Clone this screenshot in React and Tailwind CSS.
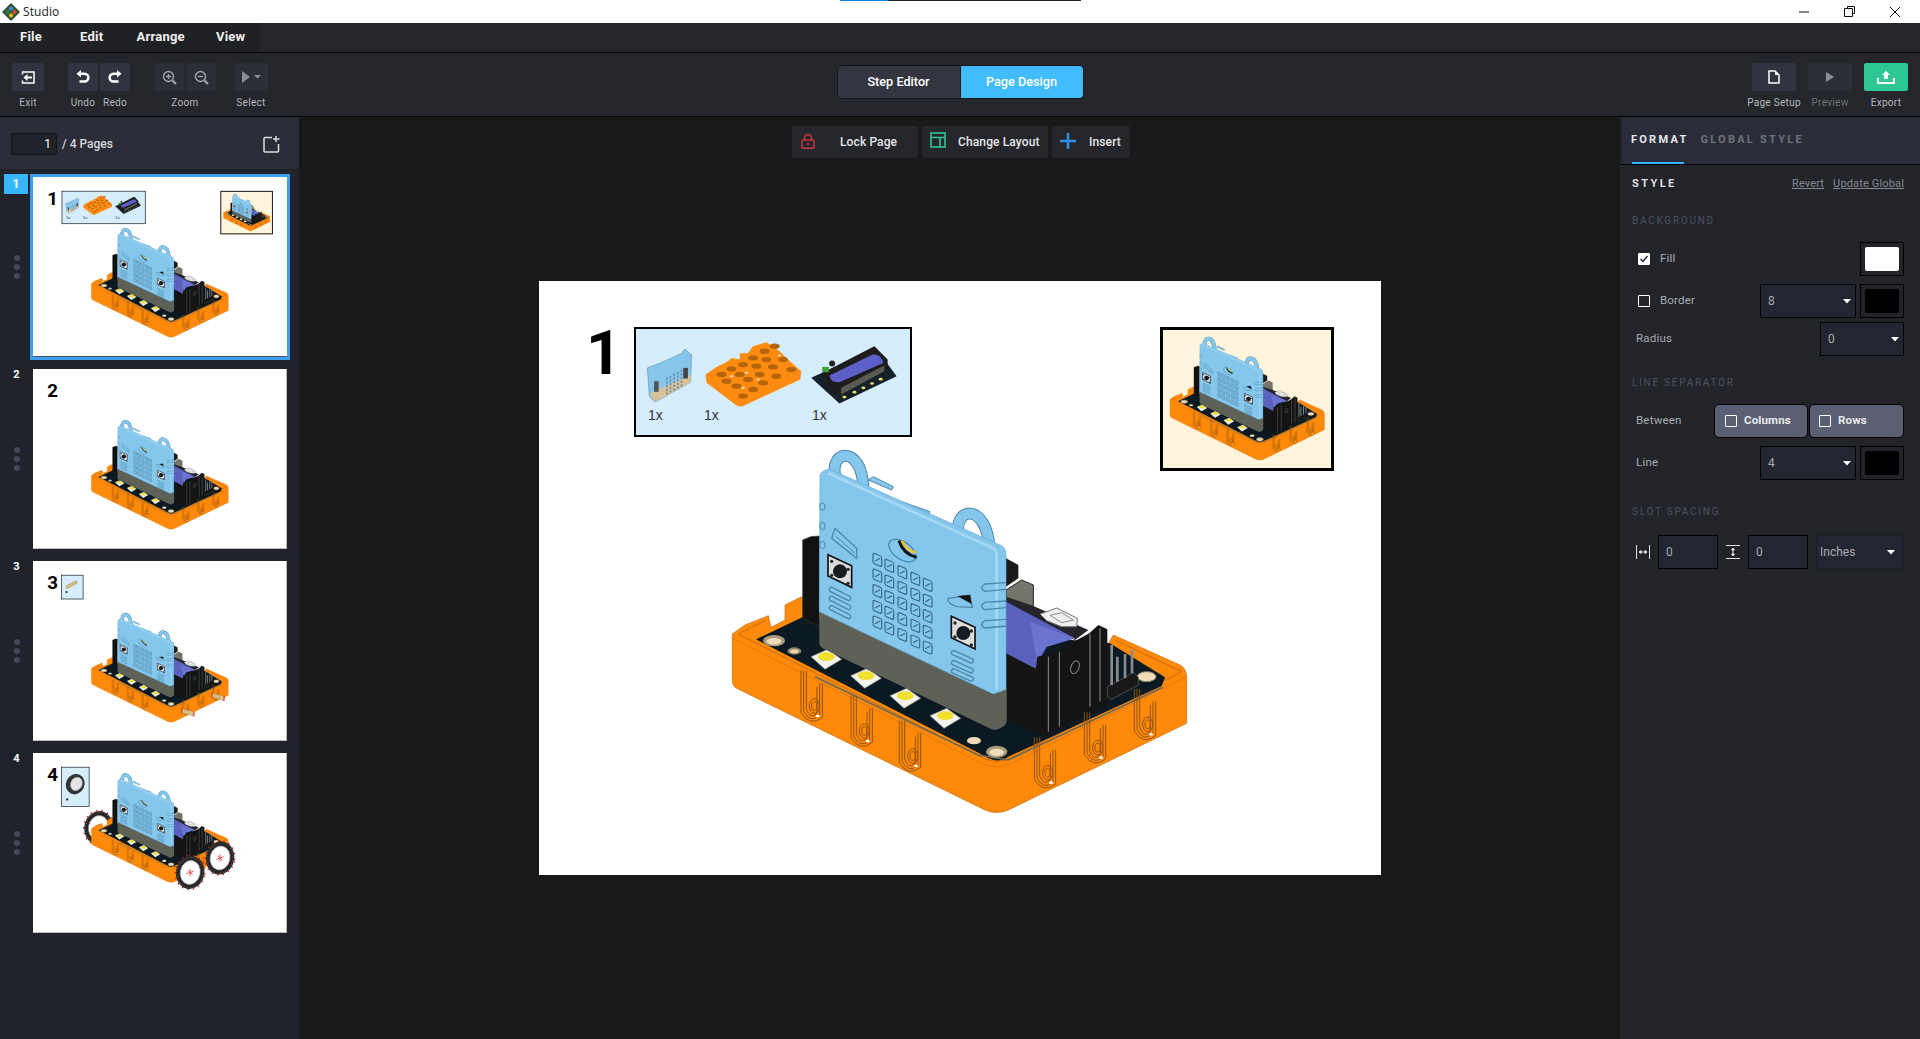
import React from "react";

const clips = [[335,800],[485,875],[630,950],[1035,1000],[1185,925],[1335,855]];
const leds = [[378,688],[497,745],[615,805],[735,865]];
const gx = [532,568,607,646,683];
const gy = [390,408,427,447,465];

function Model({ className }) {
  return (
    <svg viewBox="0 0 1500 1200" className={className} fill="none">
      <path d="M97 612 L135 585 L205 557 L213 592 L255 570 L255 525 L305 500 L330 570 L920 880 L1100 860 L1240 615 L1440 705 Q1460 715 1460 745 L1460 880 L925 1140 Q890 1155 855 1140 L110 775 Q97 768 97 750 Z" fill="#ff8a0a" stroke="#c06c10" strokeWidth="2" />
      <path d="M97 625 L845 1000 Q890 1020 935 1000 L1460 740" stroke="#e27908" strokeWidth="3" />
      <path d="M115 612 L200 570 M115 612 L850 985 Q890 1003 930 985 L1445 725 L1245 630" stroke="#a85a10" strokeWidth="2" />
      <path d="M168 628 L310 560 L1230 640 L1395 742 L1385 768 L925 980 Q895 1000 865 985 L835 968 Z" fill="#0b1a22" />
      <path d="M345 740 L835 975 L925 990 L1388 772" stroke="#6b6a58" strokeWidth="5" />
      <ellipse cx="222" cy="632" rx="33" ry="17" fill="#a99a7c" /><ellipse cx="222" cy="634" rx="22" ry="10" fill="#f0dcb8" />
      <ellipse cx="283" cy="663" rx="21" ry="11" fill="#8f8468" /><ellipse cx="283" cy="664" rx="13" ry="6" fill="#ead6ae" />
      <ellipse cx="822" cy="932" rx="21" ry="11" fill="#f0dcb8" />
      <ellipse cx="890" cy="965" rx="32" ry="18" fill="#a99a7c" /><ellipse cx="890" cy="967" rx="22" ry="11" fill="#f0dcb8" />
      <ellipse cx="1340" cy="740" rx="28" ry="15" fill="#f0dcb8" stroke="#8f8468" strokeWidth="3" />
      <path d="M308 330 L332 320 L358 318 L358 590 L308 565 Z" fill="#111" stroke="#333" strokeWidth="2" />
      <path d="M918 385 L955 405 L955 445 L918 470 Z" fill="#1a1a1a" />
      <path d="M918 480 L965 450 L1000 465 L1000 530 L920 510 Z" fill="#74756b" stroke="#222" strokeWidth="3" />
      <path d="M918 500 L1000 528 L1165 600 L1125 630 L918 520 Z" fill="#24242a" />
      <path d="M1020 552 L1070 534 L1132 565 L1130 590 L1085 590 L1040 572 Z" fill="#efefef" stroke="#777" strokeWidth="3" />
      <path d="M1050 556 L1085 548 L1120 570 L1085 578 Z" stroke="#777" strokeWidth="2.5" />
      <path d="M918 515 L1125 625 L1040 650 L1005 718 L918 675 Z" fill="#5a61bd" />
      <path d="M990 575 L1125 625 L1040 650 L1010 690 Z" fill="#6a74d0" />
      <path d="M918 670 L1008 716 L1012 680 L1060 668 L1168 610 L1195 585 L1222 598 L1222 822 L1030 918 L918 868 Z" fill="#141414" />
      <path d="M1045 680 V905 M1078 665 V890 M1170 612 V830 M1200 595 V815" stroke="#8e8e8e" strokeWidth="3" />
      <ellipse cx="1125" cy="712" rx="12" ry="20" transform="rotate(20 1125 712)" stroke="#888" strokeWidth="3" />
      <path d="M1222 770 L1300 728 L1315 742 L1315 765 L1235 808 L1222 800 Z" fill="#181818" stroke="#666" strokeWidth="2" />
      <path d="M1235 645 V765 M1252 680 V755 M1275 672 V745 M1296 660 V730" stroke="#8a8a8a" strokeWidth="8" />
      {leds.map(([x, y]) => (
        <g key={x} transform={`translate(${x} ${y})`}>
          <path d="M-45 -8 L5 -30 L47 0 L-3 30 Z" fill="#f3f3ef" stroke="#888" strokeWidth="2" />
          <ellipse cx="1" cy="-8" rx="25" ry="13" fill="#f2e02e" />
        </g>
      ))}
      <path d="M358 540 L358 640 Q358 650 372 657 L875 898 Q890 904 905 892 Q920 885 920 870 L920 775 L880 795 Z" fill="#5f6157" />
      <path d="M520 140 L580 170 L575 180 L505 150 Z M605 215 L690 245 L685 255 L600 225 Z" fill="#85c6ec" stroke="#4f87a8" strokeWidth="3" />
      <path d="M405 135 C392 55 485 50 490 170" stroke="#4f87a8" strokeWidth="36" />
      <path d="M405 135 C392 55 485 50 490 170" stroke="#85c6ec" strokeWidth="30" />
      <path d="M775 310 C765 225 860 225 868 350" stroke="#4f87a8" strokeWidth="36" />
      <path d="M775 310 C765 225 860 225 868 350" stroke="#85c6ec" strokeWidth="30" />
      <path d="M360 135 Q365 120 390 118 L900 345 Q918 352 918 375 L918 778 L880 793 L358 545 Z" fill="#85c6ec" stroke="#6aabd0" strokeWidth="2" />
      <path d="M385 130 L880 355 Q890 362 890 380 L890 780" stroke="#a6d8f4" strokeWidth="8" />
      {[230,288,345].map((y) => <ellipse key={y} cx="367" cy={y} rx="8" ry="11" stroke="#4f87a8" strokeWidth="3" />)}
      {[470,525,580].map((y) => <path key={y} d={`M918 ${y-12} L855 ${y-8} Q835 ${y+4} 855 ${y+14} L918 ${y+8}`} stroke="#4f87a8" strokeWidth="4" />)}
      <path d="M405 295 L470 355 L470 385 L395 325 Z" stroke="#4f87a8" strokeWidth="4" />
      <path d="M410 320 L465 370" stroke="#4f87a8" strokeWidth="3" />
      <path d="M745 505 L810 495 L817 532 L770 530 Q740 520 745 505 Z" stroke="#4f87a8" strokeWidth="4" />
      <path d="M772 498 L810 495 L815 522 Z" fill="#111" />
      <ellipse cx="607" cy="362" rx="46" ry="26" transform="rotate(35 607 362)" stroke="#4f87a8" strokeWidth="4" />
      <path d="M597 332 Q610 372 650 382" stroke="#111" strokeWidth="9" />
      <path d="M605 332 Q620 362 648 368" stroke="#f4c514" strokeWidth="7" />
      {gy.map((_, c) => [0,1,2,3,4].map((r) => (
        <g key={`${c}-${r}`} transform={`translate(${gx[c]} ${gy[c] + r * 47}) skewY(22)`}>
          <rect x="-13" y="-16" width="26" height="31" rx="5" stroke="#3a6985" strokeWidth="3.5" />
          <path d="M-7 6 L8 -8" stroke="#3a6985" strokeWidth="3" />
        </g>
      )))}
      {[[420,422],[790,607]].map(([x,y]) => (
        <g key={x} transform={`translate(${x} ${y})`}>
          <path d="M-36 -48 L35 -15 L35 50 L-36 16 Z" fill="#dcdcdc" stroke="#111" strokeWidth="5" />
          <circle r="21" cy="2" fill="#141c22" />
          {[[-25,-28],[24,-4],[-25,14],[24,38]].map(([a,b],i)=><circle key={i} cx={a} cy={b} r="5" fill="#222" />)}
        </g>
      ))}
      {[470,497,525].map((y) => <rect key={y} x="392" y={y} width="70" height="13" rx="5" transform={`rotate(27 392 ${y})`} stroke="#4f87a8" strokeWidth="4" />)}
      {[660,690,715].map((y) => <rect key={y} x="758" y={y} width="70" height="13" rx="5" transform={`rotate(24 758 ${y})`} stroke="#4f87a8" strokeWidth="4" />)}
      {clips.map(([x,y]) => (
        <g key={x} transform={`translate(${x} ${y})`} stroke="#8f5208" strokeWidth="3">
          <path d="M-32 -78 L-32 48 Q-5 92 32 62 L32 -40" />
          <path d="M-24 -78 L-24 44 Q-3 82 24 56 L24 -40" />
          <path d="M-16 -78 L-16 38 Q-3 70 16 50 L16 -30" />
          <ellipse cx="8" cy="28" rx="15" ry="22" />
          <ellipse cx="8" cy="28" rx="8" ry="13" />
          <ellipse cx="18" cy="58" rx="6" ry="4" fill="#fff" stroke="none" />
        </g>
      ))}
    </svg>
  );
}

const plateHoles = [[545,285],[575,268],[610,255],[640,235],[675,215],[705,200],[730,240],[755,270],[700,262],[660,285],[625,300],[590,320],[560,305],[640,330],[670,310],[710,290],[610,350],[680,240],[600,285],[650,260]];

function PartsArt() {
  return (
    <svg viewBox="280 142 834 328" className="w-[278px] h-[109px]" fill="none">
      <path d="M322 265 L362 250 L425 222 L435 208 L450 222 L455 225 L452 308 L345 368 L328 350 Z" fill="#88c5ea" stroke="#5f95b5" strokeWidth="2" />
      <path d="M328 342 L452 285 L452 308 L345 368 Z" fill="#d8c29a" />
      <rect x="342" y="305" width="14" height="32" fill="#555" /><rect x="430" y="265" width="14" height="32" fill="#444" />
      {[0,1,2,3,4].map((a)=>[0,1,2,3,4].map((b)=><rect key={`${a}${b}`} x={378+a*11} y={295-a*6+b*11} width="5" height="6" fill="#5f8aa6" />))}
      <path d="M497 285 L530 262 L565 245 L575 235 L600 240 L600 222 L625 220 L640 200 L680 188 L720 215 L745 240 L785 275 L782 300 L605 382 L590 378 L500 310 Z" fill="#ff8c10" />
      {plateHoles.map(([x,y],i)=>(
        <ellipse key={i} cx={x} cy={y} rx="15" ry="8" fill="#b5640a" />
      ))}
      {[[620,280],[575,290],[720,228],[610,325],[655,300]].map(([x,y],i)=><ellipse key={i} cx={x} cy={y} rx="5" ry="3" fill="#fff" opacity="0.8" />)}
      <path d="M815 295 L1010 205 L1072 290 L900 372 Z" fill="#16222a" />
      <path d="M850 280 L1005 200 L1045 240 L1045 272 L895 348 L875 340 Z" fill="#1c1c1c" />
      <path d="M870 288 L1000 225 Q1025 222 1032 250 L900 308 Q872 310 870 288 Z" fill="#5c5fc8" />
      <path d="M905 345 L1035 275 L1035 258 L905 325 Z" fill="#5a5b50" />
      <circle cx="878" cy="252" r="9" fill="#222" /><rect x="848" y="262" width="20" height="16" fill="#3ea23a" />
      {[[915,353],[945,338],[972,325],[998,312],[1024,299]].map(([x,y],i)=><ellipse key={i} cx={x} cy={y} rx="6" ry="4" fill="#ecdf6a" />)}
    </svg>
  );
}

function Wheel({ x, y }) {
  return (
    <svg viewBox="-60 -60 120 120" width="120" height="120" className="absolute" style={{ left: x - 60, top: y - 60 }}>
      <ellipse rx="47" ry="55" transform="rotate(12)" fill="#262626" />
      <ellipse rx="49" ry="57" transform="rotate(12)" fill="none" stroke="#e01010" strokeWidth="4" strokeDasharray="5 14" />
      <ellipse rx="43" ry="51" transform="rotate(12)" fill="none" stroke="#555" strokeWidth="4" strokeDasharray="4 6" />
      <ellipse rx="33" ry="40" transform="rotate(12)" fill="#fff" stroke="#999" strokeWidth="2" />
      <path d="M-12 4 L12 -4 M0 -12 L0 12 M-8 -8 L8 8" stroke="#e04a4a" strokeWidth="3" />
    </svg>
  );
}

function Peg({ x, y }) {
  return (
    <svg viewBox="0 0 48 34" className="absolute w-[48px] h-[34px]" style={{ left: x - 24, top: y - 17 }}>
      <path d="M4 6 L42 16 L40 30 L3 20 Z" fill="#e2c48e" stroke="#a88a58" strokeWidth="1.5" />
      <path d="M12 8 L10 22 M20 10 L18 24 M28 12 L26 26" stroke="#a88a58" strokeWidth="1.5" />
      <path d="M2 4 L2 22 M43 15 L42 32" stroke="#e01010" strokeWidth="3" />
    </svg>
  );
}

function Page({ n }) {
  const shift = n === 4 ? "top-[47px]" : n === 3 ? "top-[152px]" : "top-[149px]";
  return (
    <div className="relative w-[842px] h-[594px] bg-white overflow-hidden">
      {n === 4 && <Wheel x={217} y={247} />}
      <Model className={`absolute left-[161px] ${shift} w-[500px] h-[400px]`} />
      {n === 4 && <><Wheel x={521} y={396} /><Wheel x={620} y={348} /></>}
      {n === 3 && <><Peg x={615} y={449} /><Peg x={515} y={501} /></>}
      <div className="absolute left-[47px] top-[36px] text-[62px] leading-[72px] font-bold text-black">{n}</div>
      {n === 1 && (
        <>
          <div className="absolute left-[95px] top-[46px] w-[278px] h-[110px] border-2 border-black bg-[#d5edfd] overflow-hidden">
            <div className="-ml-[3px] -mt-[2px]"><PartsArt /></div>
            {[[12,"1x"],[68,"1x"],[176,"1x"]].map(([l,t],i)=>(
              <span key={i} style={{ left: l }} className="absolute top-[78px] text-[14px] leading-[16px] text-[#333] font-['Liberation_Sans',sans-serif]">{t}</span>
            ))}
          </div>
          <div className="absolute left-[621px] top-[46px] w-[174px] h-[144px] border-[3px] border-black bg-[#fff4dc] overflow-hidden">
            <Model className="absolute left-[-4px] top-[0px] w-[170px] h-[136px]" />
          </div>
        </>
      )}
      {n === 3 && (
        <div className="absolute left-[94px] top-[46px] w-[73px] h-[81px] border-2 border-black bg-[#d5edfd]">
          <svg viewBox="0 0 73 81" className="w-full h-full">
            <path d="M14 36 L50 18 L54 26 L18 46 Z" fill="#d9bb84" stroke="#9c8152" strokeWidth="1.5" />
            <circle cx="16" cy="58" r="4" fill="#333" />
          </svg>
        </div>
      )}
      {n === 4 && (
        <div className="absolute left-[94px] top-[46px] w-[93px] h-[132px] border-2 border-black bg-[#d5edfd]">
          <svg viewBox="0 0 93 132" className="w-full h-full">
            <ellipse cx="46" cy="57" rx="32" ry="36" transform="rotate(25 46 57)" fill="#333" />
            <ellipse cx="50" cy="56" rx="20" ry="24" transform="rotate(25 50 56)" fill="#e4e4e4" stroke="#999" strokeWidth="2" />
            <circle cx="18" cy="110" r="4" fill="#333" />
          </svg>
        </div>
      )}
    </div>
  );
}

function Thumb({ n, active }) {
  return (
    <div className="relative flex mb-[12px]">
      <div className="w-[33px] flex flex-col items-center">
        {active ? (
          <div className="absolute left-[4px] top-[-3px] w-[24px] h-[20px] bg-[#38b6ff] text-white text-[12px] font-bold leading-[20px] text-center">{n}</div>
        ) : (
          <div className="h-[12px] text-white text-[11px] font-bold leading-[12px] text-center">{n}</div>
        )}
        <div className={`${active ? "mt-[78px]" : "mt-[66px]"} flex flex-col gap-[3px]`}>
          <span className="block w-[6px] h-[6px] rounded-full bg-[#44465a]" />
          <span className="block w-[6px] h-[6px] rounded-full bg-[#44465a]" />
          <span className="block w-[6px] h-[6px] rounded-full bg-[#44465a]" />
        </div>
      </div>
      <div className={`w-[254px] h-[180px] overflow-hidden ${active ? "outline-[3px] outline-[#3c9ff0]" : "border-r border-b border-[#bbb]"}`}>
        <div className="origin-top-left scale-[0.3017]"><Page n={n} /></div>
      </div>
    </div>
  );
}

const ToolBtn = ({ w = "w-[30px]", bg = "bg-[#31333f]", children }) => (
  <div className={`${w} h-[28px] rounded-[2px] ${bg} flex items-center justify-center`}>{children}</div>
);
const Lab = ({ children, dim }) => (
  <div className={`mt-[6px] h-[12px] text-[10px] leading-[12px] tracking-[0.3px] whitespace-nowrap ${dim ? "text-[#6d6f76]" : "text-[#b4b6bb]"}`}>{children}</div>
);
const Caret = () => (
  <svg width="8" height="5" viewBox="0 0 8 5"><path d="M0 0 H8 L4 4.5 Z" fill="#fff" /></svg>
);
const Sel = ({ w, v, plain }) => (
  <div className={`${w} h-[34px] flex items-center justify-between bg-[#222630] text-[12px] text-[#a8aab0] ${plain ? "border border-[#1c1f26] pl-[3px] pr-[8px]" : "border border-black pl-[7px] pr-[4px]"}`}>
    <span>{v}</span><Caret />
  </div>
);
const Swatch = ({ c }) => (
  <div className="w-[44px] h-[34px] border border-black flex items-center justify-center">
    <div className={`w-[34px] h-[24px] rounded-[2px] ${c}`} />
  </div>
);
const Check = ({ on }) => (
  <div className={`w-[12px] h-[12px] rounded-[1px] border border-white flex items-center justify-center ${on ? "bg-white" : ""}`}>
    {on && <svg width="10" height="10" viewBox="0 0 10 10"><path d="M1.5 5 L4 7.5 L8.5 2" stroke="#222" strokeWidth="1.4" fill="none" /></svg>}
  </div>
);
const Section = ({ children, mt }) => (
  <div className={`${mt} h-[14px] text-[10px] leading-[14px] tracking-[1.75px] text-[#4d5060]`}>{children}</div>
);
const Label = ({ children, className = "" }) => <span className={`text-[11.5px] tracking-[0.2px] text-[#a8aab0] ${className}`}>{children}</span>;

export default function App() {
  return (
    <div className="relative w-[1920px] h-[1039px] overflow-hidden flex flex-col bg-[#191919] font-['Roboto',sans-serif]">
      <div className="absolute left-[840px] top-0 w-[241px] h-px bg-[#222] z-10"><div className="w-[48px] h-px bg-[#0a84dc]" /></div>

      {/* Title bar */}
      <div className="h-[23px] bg-white flex items-center text-[#222]">
        <svg width="18" height="18" viewBox="0 0 18 18" className="ml-[2px]">
          <path d="M9 1 L17 9 L9 17 L1 9 Z" fill="#3e5d3a" stroke="#2f4a33" strokeLinejoin="round" strokeWidth="1.5" />
          <circle cx="9" cy="5.5" r="2" fill="#2f8fe0" /><circle cx="5.5" cy="9" r="2" fill="#2a7a42" /><circle cx="12.5" cy="9" r="2" fill="#e04a32" /><circle cx="9" cy="12.5" r="2" fill="#f0bd20" />
        </svg>
        <span className="ml-[3px] text-[12px] tracking-[0.1px] font-['Open_Sans',sans-serif]">Studio</span>
        <div className="ml-auto flex items-center">
          <svg width="12" height="12" viewBox="0 0 12 12" className="mr-[34px]"><path d="M1 6 H11" stroke="#111" /></svg>
          <svg width="12" height="12" viewBox="0 0 12 12" className="mr-[33px]" fill="none"><path d="M3.5 2.5 V.5 H10.5 V7.5 H8.5 M.5 2.5 H8.5 V10.5 H.5 Z" stroke="#111" /></svg>
          <svg width="12" height="12" viewBox="0 0 12 12" className="mr-[19px]"><path d="M1 1 L11 11 M11 1 L1 11" stroke="#111" /></svg>
        </div>
      </div>

      {/* Menu bar */}
      <div className="h-[30px] bg-[#24262b] border-b border-black flex">
        <div className="w-[260px] bg-[#202124] flex items-center pl-[20px] pb-[2px] text-[13px] font-bold tracking-[0.25px] text-[#f0f0f0]">
          <span>File</span><span className="ml-[38px]">Edit</span><span className="ml-[33px]">Arrange</span><span className="ml-[31px]">View</span>
        </div>
      </div>

      {/* Toolbar */}
      <div className="h-[64px] bg-[#24262b] border-b border-black grid grid-cols-[1fr_auto_1fr]">
        <div className="flex pt-[10px] pl-[12px]">
          <div className="flex flex-col items-center w-[32px]">
            <ToolBtn w="w-[32px]">
              <svg width="14" height="13" viewBox="0 0 14 13" fill="none"><path d="M1.5 3.5 V1 H13 V12 H1.5 V9.5" stroke="#fff" strokeWidth="1.5" /><path d="M11 6.5 H5" stroke="#fff" strokeWidth="2" /><path d="M6.5 3 L2.5 6.5 L6.5 10 Z" fill="#fff" /></svg>
            </ToolBtn>
            <Lab>Exit</Lab>
          </div>
          <div className="ml-[24px] flex flex-col items-center w-[30px]">
            <ToolBtn><svg width="14" height="14" viewBox="0 0 14 14" fill="none"><path d="M5 0 V7.5 L0.5 3.7 Z" fill="#fff" /><path d="M4 3.7 H8.5 A3.8 3.8 0 0 1 8.5 11.5 H3.5" stroke="#fff" strokeWidth="2.5" /></svg></ToolBtn>
            <Lab>Undo</Lab>
          </div>
          <div className="ml-[2px] flex flex-col items-center w-[30px]">
            <ToolBtn><svg width="14" height="14" viewBox="0 0 14 14" fill="none"><path d="M9 0 V7.5 L13.5 3.7 Z" fill="#fff" /><path d="M10 3.7 H5.5 A3.8 3.8 0 0 0 5.5 11.5 H10.5" stroke="#fff" strokeWidth="2.5" /></svg></ToolBtn>
            <Lab>Redo</Lab>
          </div>
          <div className="ml-[24px] flex flex-col items-center w-[62px]">
            <div className="flex gap-[2px]">
              <ToolBtn bg="bg-[#2c2e37]"><svg width="15" height="15" viewBox="0 0 15 15" fill="none" stroke="#a4a5aa"><circle cx="6.5" cy="6.5" r="5" strokeWidth="1.4" /><path d="M10.5 10.5 L14 14" strokeWidth="2.2" /><path d="M4 6.5 H9 M6.5 4 V9" strokeWidth="1.3" /></svg></ToolBtn>
              <ToolBtn bg="bg-[#2c2e37]"><svg width="15" height="15" viewBox="0 0 15 15" fill="none" stroke="#a4a5aa"><circle cx="6.5" cy="6.5" r="5" strokeWidth="1.4" /><path d="M10.5 10.5 L14 14" strokeWidth="2.2" /><path d="M4 6.5 H9" strokeWidth="1.3" /></svg></ToolBtn>
            </div>
            <Lab>Zoom</Lab>
          </div>
          <div className="ml-[18px] flex flex-col items-center w-[34px]">
            <ToolBtn w="w-[34px]" bg="bg-[#2c2e37]"><svg width="20" height="12" viewBox="0 0 20 12"><path d="M1 0 L9 6 L1 12 Z" fill="#8d8e94" /><path d="M13 4 H20 L16.5 7.5 Z" fill="#8d8e94" /></svg></ToolBtn>
            <Lab>Select</Lab>
          </div>
        </div>
        <div className="flex pt-[12px]">
          <div className="h-[34px] flex rounded-[5px] border border-[#15161a] overflow-hidden text-[12.7px] font-medium text-white">
            <div className="w-[123px] bg-[#333641] flex items-center justify-center border-r border-[#15161a]">Step Editor</div>
            <div className="w-[122px] bg-[#41bdfd] flex items-center justify-center">Page Design</div>
          </div>
        </div>
        <div className="flex justify-end gap-[12px] pt-[10px] pr-[12px]">
          <div className="flex flex-col items-center w-[44px]">
            <ToolBtn w="w-[44px]"><svg width="12" height="14" viewBox="0 0 12 14" fill="none"><path d="M1 1 H7 L11 5 V13 H1 Z" stroke="#fff" strokeWidth="1.5" /><path d="M7 1 V5 H11 Z" fill="#fff" /></svg></ToolBtn>
            <Lab>Page Setup</Lab>
          </div>
          <div className="flex flex-col items-center w-[44px]">
            <ToolBtn w="w-[44px]" bg="bg-[#2c2e37]"><svg width="10" height="12" viewBox="0 0 10 12"><path d="M1 1 L9 6 L1 11 Z" fill="#8d8e94" /></svg></ToolBtn>
            <Lab dim>Preview</Lab>
          </div>
          <div className="flex flex-col items-center w-[44px]">
            <ToolBtn w="w-[44px]" bg="bg-[#2cc795]"><svg width="18" height="13" viewBox="0 0 18 13"><path d="M9 0 L13 4 H11 V8 H7 V4 H5 Z" fill="#fff" /><path d="M1 7 V12 H17 V7" stroke="#fff" strokeWidth="2" fill="none" /></svg></ToolBtn>
            <Lab>Export</Lab>
          </div>
        </div>
      </div>

      <div className="flex-1 flex min-h-0">
        {/* Left sidebar */}
        <div className="w-[300px] bg-[#21232a] border-r border-[#191919] flex flex-col">
          <div className="h-[53px] bg-[#2a2d37] border-b border-[#1e2026] flex items-center pl-[11px] pt-[2px]">
            <div className="w-[46px] h-[22px] rounded-[2px] border border-[#14151a] bg-[#20222a] text-right pr-[5px] text-[12px] leading-[20px] text-white">1</div>
            <span className="ml-[5px] text-[12px] font-medium text-[#d6d7da]">/ 4 Pages</span>
            <svg width="18" height="18" viewBox="0 0 18 18" fill="none" className="ml-auto mr-[18px]"><path d="M9 2.5 H2 Q1 2.5 1 3.5 V16 Q1 17 2 17 H14.5 Q15.5 17 15.5 16 V9" stroke="#ddd" strokeWidth="1.5" /><path d="M13 1 V7 M10 4 H16.5" stroke="#ddd" strokeWidth="1.5" /></svg>
          </div>
          <div className="mt-[7px] flex flex-col">
            <Thumb n={1} active /><Thumb n={2} /><Thumb n={3} /><Thumb n={4} />
          </div>
        </div>

        {/* Centre */}
        <div className="flex-1 flex flex-col">
          <div className="mt-[9px] ml-[2px] flex justify-center gap-[4px] text-[12px] font-medium tracking-[0.12px] text-[#e4e5e7]">
            <div className="w-[126px] h-[32px] bg-[#24262c] rounded-[2px] flex items-center pl-[9px]">
              <svg width="14" height="15" viewBox="0 0 14 15" fill="none" className="-mt-[2px]"><path d="M3.5 6 V4 A3.5 3.5 0 0 1 10.5 4 V6" stroke="#c9353a" strokeWidth="1.5" /><rect x="1" y="6" width="12" height="8.3" rx="1" stroke="#c9353a" strokeWidth="1.5" /><circle cx="7" cy="10" r="1.2" fill="#c9353a" /></svg>
              <span className="ml-[25px]">Lock Page</span>
            </div>
            <div className="w-[126px] h-[32px] bg-[#24262c] rounded-[2px] flex items-center pl-[8px]">
              <svg width="16" height="16" viewBox="0 0 16 16" fill="none" stroke="#2cc795" strokeWidth="1.6" className="-mt-[4px]"><rect x="1" y="1" width="14" height="14" /><path d="M1 5.5 H15 M10 5.5 V15" /></svg>
              <span className="ml-[12px] whitespace-nowrap">Change Layout</span>
            </div>
            <div className="w-[78px] h-[32px] bg-[#24262c] rounded-[2px] flex items-center pl-[8px]">
              <svg width="16" height="16" viewBox="0 0 16 16" stroke="#2f8de4" strokeWidth="2.6" className="-mt-[3px]"><path d="M8 0 V16 M0 8 H16" /></svg>
              <span className="ml-[13px]">Insert</span>
            </div>
          </div>
          <div className="mt-[123px] ml-[239px]"><Page n={1} /></div>
        </div>

        {/* Right panel */}
        <div className="w-[300px] bg-[#22242a] flex flex-col">
          <div className="h-[48px] bg-[#2a2d38] border-b border-black border-l-2 border-l-[#22242a] relative flex items-start pl-[9px] pt-[15px] text-[11px] font-bold tracking-[2.25px]">
            <span className="text-[#e6e7ea]">FORMAT</span>
            <span className="ml-[12px] text-[#6f717a]">GLOBAL STYLE</span>
            <div className="absolute left-[10px] bottom-0 w-[52px] h-[2px] bg-[#38b6ff]" />
          </div>
          <div className="pl-[12px] pr-[16px] flex flex-col">
            <div className="h-[38px] flex items-center">
              <span className="text-[11px] font-bold tracking-[2.4px] text-[#dcdde0]">STYLE</span>
              <span className="ml-auto text-[11px] tracking-[0.15px] underline text-[#858790]">Revert</span>
              <span className="ml-[9px] text-[11px] tracking-[0.15px] underline text-[#858790]">Update Global</span>
            </div>
            <Section mt="mt-[11px]">BACKGROUND</Section>
            <div className="mt-[14px] h-[34px] flex items-center pl-[6px]">
              <Check on /><Label className="ml-[10px]">Fill</Label>
              <div className="ml-auto"><Swatch c="bg-white" /></div>
            </div>
            <div className="mt-[8px] h-[34px] flex items-center pl-[6px]">
              <Check /><Label className="ml-[10px]">Border</Label>
              <div className="ml-auto flex gap-[4px]"><Sel w="w-[96px]" v="8" /><Swatch c="bg-black" /></div>
            </div>
            <div className="mt-[4px] h-[34px] flex items-center pl-[4px]">
              <Label>Radius</Label>
              <div className="ml-auto"><Sel w="w-[84px]" v="0" /></div>
            </div>
            <Section mt="mt-[20px]">LINE SEPARATOR</Section>
            <div className="mt-[14px] h-[34px] flex items-center pl-[4px]">
              <Label>Between</Label>
              <div className="ml-auto flex gap-px text-[11.5px] font-bold tracking-[0.15px] text-[#e8e9ec]">
                <div className="w-[94px] h-[34px] rounded-[5px] border border-black bg-[#5a5f73] flex items-center pl-[10px]"><Check /><span className="ml-[7px]">Columns</span></div>
                <div className="w-[95px] h-[34px] rounded-[5px] border border-black bg-[#5a5f73] flex items-center pl-[9px]"><Check /><span className="ml-[7px]">Rows</span></div>
              </div>
            </div>
            <div className="mt-[8px] h-[34px] flex items-center pl-[4px]">
              <Label>Line</Label>
              <div className="ml-auto flex gap-[4px]"><Sel w="w-[96px]" v="4" /><Swatch c="bg-black" /></div>
            </div>
            <Section mt="mt-[25px]">SLOT SPACING</Section>
            <div className="mt-[16px] h-[34px] flex items-center pl-[4px]">
              <svg width="14" height="14" viewBox="0 0 14 14" stroke="#ddd" fill="none"><path d="M.5 0 V14 M13.5 0 V14 M3 7 H11" /><path d="M3 7 L5 5.5 V8.5 Z M11 7 L9 5.5 V8.5 Z" fill="#ddd" /></svg>
              <div className="ml-[8px] w-[60px] h-[34px] border border-black bg-[#222630] pl-[7px] text-[12px] leading-[32px] text-[#a8aab0]">0</div>
              <svg width="14" height="14" viewBox="0 0 14 14" stroke="#ddd" fill="none" className="ml-[8px]"><path d="M0 .5 H14 M0 13.5 H14 M7 3 V11" /><path d="M7 3 L5.5 5 H8.5 Z M7 11 L5.5 9 H8.5 Z" fill="#ddd" /></svg>
              <div className="ml-[8px] w-[60px] h-[34px] border border-black bg-[#222630] pl-[7px] text-[12px] leading-[32px] text-[#a8aab0]">0</div>
              <div className="ml-[8px]"><Sel w="w-[88px]" v="Inches" plain /></div>
            </div>
          </div>
        </div>
      </div>
    </div>
  );
}
